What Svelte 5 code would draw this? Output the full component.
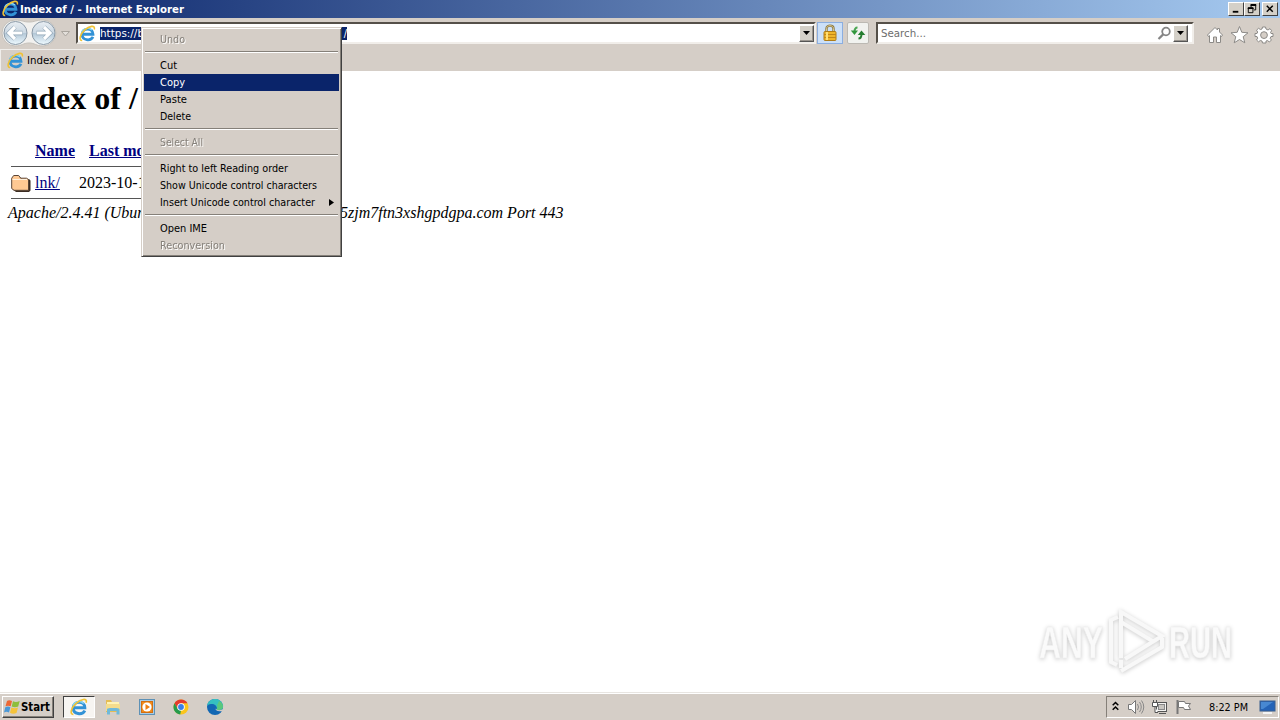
<script>
  // Context menu entries, a null is a separator
  const menuItems = [
    { label: 'Undo', width: 25, disabled: true },
    null,
    { label: 'Cut', width: 17 },
    { label: 'Copy', width: 25, selected: true },
    { label: 'Paste', width: 27 },
    { label: 'Delete', width: 31 },
    null,
    { label: 'Select All', width: 43, disabled: true },
    null,
    { label: 'Right to left Reading order', width: 128 },
    { label: 'Show Unicode control characters', width: 157 },
    { label: 'Insert Unicode control character', width: 155, submenu: true },
    null,
    { label: 'Open IME', width: 47 },
    { label: 'Reconversion', width: 65, disabled: true }
  ];
</script>

<!-- Interface text with a fixed run width -->
{#snippet uiText(label, width, kind = '')}
  <svg class="ui-text {kind}" {width} height="15">
    <text x="0" y="11" textLength={width} lengthAdjust="spacingAndGlyphs">{label}</text>
  </svg>
{/snippet}

{#snippet ieLogo(size)}
  <svg class="icon" width={size} height={size} viewBox="0 0 16 16">
    <path d="M4 8.7H13.2C13.2 2.2 3 2.2 2.9 8.6C2.8 14.8 11 15.4 13.2 11.2" fill="none" stroke="#3292d6" stroke-width="2.6" />
    <path d="M2.6 7.4C3.4 3 9.3 1.9 12.2 4.8" fill="none" stroke="#86d8f6" stroke-width="1.3" />
    <path d="M3 14.6C-.4 14.8 .8 8.9 5.2 4.9C9.4 1.1 15.6-.6 14.4 4.2" fill="none" stroke="#efc235" stroke-width="1.5" />
  </svg>
{/snippet}

{#snippet dropArrow()}
  <span class="drop-button">
    <svg width="7" height="4" viewBox="0 0 7 4"><path d="M0 0H7L3.5 4Z" /></svg>
  </span>
{/snippet}

<div class="desktop">
  <header class="title-bar">
    {@render ieLogo(17)}
    {@render uiText('Index of / - Internet Explorer', 164, 'bold white')}
    <div class="window-buttons">
      <svg width="15" height="13" viewBox="0 0 15 13"><path d="M4 9.5H10" stroke="#000" stroke-width="2" /></svg>
      <svg width="15" height="13" viewBox="0 0 15 13">
        <path d="M6.5 5V2.5H11.5V7.5H9.5M6 2.5H12M3.5 5.5H8.5V10.5H3.5ZM3 6H9" fill="none" stroke="#000" />
        <path d="M6 2H12M3 5.5H9" stroke="#000" stroke-width="2" />
      </svg>
      <svg class="close" width="15" height="13" viewBox="0 0 15 13"><path d="M4 3L10.5 9.5M10.5 3L4 9.5" stroke="#000" stroke-width="1.6" /></svg>
    </div>
  </header>

  <div class="nav-bar">
    <svg class="travel" width="74" height="28" viewBox="0 0 74 28">
      <defs>
        <linearGradient id="orb" x2="0" y2="1">
          <stop offset="0" stop-color="#e9eef3" />
          <stop offset=".48" stop-color="#cbd8e3" />
          <stop offset=".52" stop-color="#b4c8d7" />
          <stop offset="1" stop-color="#eefaff" />
        </linearGradient>
      </defs>
      <path d="M15 1C22 1 23 3 29 3S36 1 43 1A13 13 0 0 1 43 27C36 27 35 24 29 24S22 27 15 27A13 13 0 0 1 15 1Z" fill="#f2f1ef" stroke="#c5c1bb" />
      <circle cx="15.5" cy="14" r="11.5" fill="url(#orb)" stroke="#8b9aa7" />
      <circle cx="43.5" cy="14" r="11.5" fill="url(#orb)" stroke="#8b9aa7" />
      <path d="M22.5 14H10M15 8L9 14L15 20" fill="none" stroke="#8fa4b5" stroke-width="4.4" />
      <path d="M22.2 14H10M15 8L9 14L15 20" fill="none" stroke="#fff" stroke-width="3.2" />
      <path d="M36.5 14H49M44 8L50 14L44 20" fill="none" stroke="#8fa4b5" stroke-width="4.4" />
      <path d="M36.8 14H49M44 8L50 14L44 20" fill="none" stroke="#fff" stroke-width="3.2" />
      <path d="M61.5 12.5H69.5L65.5 17Z" fill="#e3dfda" stroke="#aaa59e" />
    </svg>

    <div class="field address">
      {@render ieLogo(17)}
      <div class="url">{@render uiText('https://b', 44, 'white')}<span>/</span></div>
      {@render dropArrow()}
    </div>

    <div class="tool lock">
      <svg width="16" height="18" viewBox="0 0 16 18">
        <path d="M4.5 9V4.5C4.5 .7 11.5 .7 11.5 4.5V9" fill="none" stroke="#8b7945" stroke-width="2.4" />
        <path d="M4.5 9V4.5C4.5 .7 11.5 .7 11.5 4.5V9" fill="none" stroke="#d8c58a" />
        <rect x="2" y="7.5" width="12" height="9" rx="1" fill="#efb52b" stroke="#ae7c18" />
        <path d="M2 10.5H14M2 13.5H14" stroke="#c28719" />
        <path d="M5 8V16" stroke="#ffdf76" stroke-width="2" />
      </svg>
    </div>
    <div class="tool refresh">
      <svg width="16" height="16" viewBox="0 0 16 16">
        <path d="M7.5 2.5C5 2.5 4.5 4 4.5 7" fill="none" stroke="#4aa653" stroke-width="2" />
        <path d="M.8 5.5L4.5 10L8 5.5Z" fill="#31963c" />
        <path d="M8.5 13.5C11 13.5 11.5 12 11.5 9" fill="none" stroke="#257d30" stroke-width="2" />
        <path d="M7.8 10L11.5 5.5L15.3 10Z" fill="#257d30" />
      </svg>
    </div>

    <div class="field search">
      {@render uiText('Search...', 45, 'gray')}
      <svg class="magnifier" width="15" height="15" viewBox="0 0 15 15">
        <circle cx="9" cy="5.5" r="3.8" fill="none" stroke="#858585" stroke-width="1.8" />
        <path d="M6.2 8.4L1.5 13" stroke="#858585" stroke-width="2.2" />
      </svg>
      {@render dropArrow()}
    </div>

    <svg class="commands" width="70" height="20" viewBox="0 0 70 20">
      <g fill="#fff" stroke="#8c8a87" stroke-linejoin="round">
        <path d="M1.5 10L9 2.5L11.5 5V3.5H13.5V7L16.5 10L15.5 11.5L14.5 10.6V17.5H10.5V12H7.5V17.5H3.5V10.6L2.5 11.5Z" />
        <path d="M33.5 1.5L35.8 7.3L42 7.8L37.2 11.7L38.8 17.8L33.5 14.5L28.2 17.8L29.8 11.7L25 7.8L31.2 7.3Z" />
        <path fill-rule="evenodd" d="M56.5 2H59.5L60 4L62 5L64 3.6L65.6 5.7L64.5 7.5L65 8.5H67V11.5H65L64.2 13.3L65.4 15L63.4 17L61.6 15.6L60 16V18H56.5L56 16L54.3 15.5L52.5 16.8L50.5 15L51.7 13.2L51 11.5H49V8.5H51L51.7 7L50.5 5.2L52.5 3.3L54.4 4.5L56 4ZM58 6.7A3.4 3.4 0 1 0 58 13.5A3.4 3.4 0 1 0 58 6.7Z" />
      </g>
    </svg>
  </div>

  <div class="tab-bar">
    <div class="tab">
      {@render ieLogo(17)}
      {@render uiText('Index of /', 48)}
    </div>
  </div>

  <main>
    <h1>Index of /</h1>
    <div class="listing">
      <div class="row head">
        <span class="cell-icon"></span>
        <a class="name" href="#name">Name</a>
        <a class="modified" href="#modified">Last mo</a>
      </div>
      <hr />
      <div class="row">
        <svg class="cell-icon" width="20" height="22" viewBox="0 0 20 22">
          <path d="M2.5 8L4 5H9L11 7H18L19.5 8.5V18.5L18 20H5L2.5 18Z" fill="#3b2c22" />
          <path d="M.7 6.2L2.7 3.5H7.7L9.7 6.2H15.5L17.5 7.5V18.3H3L.7 16.5Z" fill="#ffc993" stroke="#5b4637" />
          <path d="M1.5 7.5H16" stroke="#fff0dc" />
        </svg>
        <a class="name" href="#lnk">lnk/</a>
        <span class="date">2023-10-1</span>
      </div>
      <hr />
    </div>
    <address>
      <span class="server">Apache/2.4.41 (Ubun</span>
      <span>5zjm7ftn3xshgpdgpa.com Port 443</span>
    </address>
  </main>

  <footer class="taskbar">
    <button class="start">
      <svg width="17" height="16" viewBox="0 0 17 16">
        <path d="M3 2Q5 .7 8 2L6.7 7.3Q4 6 1.5 7.3Z" fill="#ed6835" />
        <path d="M9 2.3Q12 3.7 15.7 2L14.2 7.5Q11 9 7.7 7.6Z" fill="#8dbe3c" />
        <path d="M1.3 8.2Q4 7 6.4 8.2L5 13.4Q2.3 12 0 13.4Z" fill="#4b98d7" />
        <path d="M7.4 8.5Q11 10 14 8.4L12.5 14Q9 15.7 6 13.8Z" fill="#f5c33b" />
      </svg>
      {@render uiText('Start', 29, 'bold start-label')}
    </button>
    <div class="task active">{@render ieLogo(18)}</div>
    <svg class="task-icon" width="18" height="18" viewBox="0 0 18 18">
      <path d="M2 2H7L8 4H15V14H2Z" fill="#e5bd55" />
      <path d="M3 4H15V8H3Z" fill="#fff3b4" />
      <path d="M2 6H16V13H2Z" fill="#f4dc8c" />
      <path d="M3 16.5V11.5Q3 10 6 10H12.5Q15.5 10 15.5 11.5V16.5H12.5V13H6V16.5Z" fill="#70b9d9" />
    </svg>
    <svg class="task-icon" width="18" height="18" viewBox="0 0 18 18">
      <rect x="1.5" y="1.5" width="15" height="15" fill="#a9cce5" stroke="#5d91b6" />
      <rect x="3.5" y="3.5" width="11" height="11" fill="#f28a19" stroke="#d16e11" />
      <circle cx="9" cy="9" r="4.6" fill="#fff" />
      <path d="M7.5 6L12 9L7.5 12Z" fill="#ee7f12" />
    </svg>
    <svg class="task-icon" width="18" height="18" viewBox="0 0 18 18">
      <circle cx="9" cy="9" r="7.5" fill="#fbc51b" />
      <path d="M2.5 5.2A7.5 7.5 0 0 1 15.5 5.2H9L5.7 11Z" fill="#e33b2e" />
      <path d="M2.5 5.2L5.8 11L9 12.6L8.2 16.5A7.5 7.5 0 0 1 2.5 5.2Z" fill="#269b4c" />
      <circle cx="9" cy="9" r="3.8" fill="#fff" />
      <circle cx="9" cy="9" r="2.9" fill="#397fe8" />
    </svg>
    <svg class="task-icon" width="18" height="18" viewBox="0 0 18 18">
      <circle cx="9" cy="9" r="8" fill="#1267b3" />
      <path d="M1 8C2 0 14-2 17 7C18 12 13 13 10.5 11.5C12 9 9 5.5 5 6C3 6.2 1.5 7 1 8Z" fill="#35bfc0" />
      <path d="M13 3C16 4.5 17.6 7 16.8 10C15 12.5 12 12.3 10.5 11.5Q12 9 11 7.5Z" fill="#5bc77c" />
      <path d="M9.5 10.5C9.5 13 13 14 16.5 12.8L17.5 14.5L18 11L16 11.5Q13 13 10.5 11.5Z" fill="#d5cec7" />
    </svg>

    <div class="tray">
      <svg class="chevrons" width="7" height="11" viewBox="0 0 7 11"><path d="M.7 4.3L3.5 1.5L6.3 4.3M.7 8.8L3.5 6L6.3 8.8" fill="none" stroke="#000" stroke-width="1.5" /></svg>
      <svg width="18" height="16" viewBox="0 0 18 16">
        <path d="M1.5 5.5H4.5L8.5 1.5V14.5L4.5 10.5H1.5Z" fill="#fff" stroke="#777" />
        <path d="M10.5 5Q12.5 8 10.5 11M12.5 3Q16 8 12.5 13M14.5 1.5Q19 8 14.5 14.5" fill="none" stroke="#888" />
      </svg>
      <svg width="18" height="16" viewBox="0 0 18 16">
        <rect x="5.5" y="3.5" width="10" height="9" fill="#f4f3f1" stroke="#555" />
        <rect x="7.5" y="5.5" width="6" height="5" fill="#c9c6c1" stroke="#888" />
        <path d="M8 14.5H15M2.5 1V4M5.5 1V4M1.5 3.5H6.5V7.5H1.5ZM4 7.5V13.5H7" fill="#fff" stroke="#555" />
      </svg>
      <svg width="18" height="16" viewBox="0 0 18 16">
        <path d="M2.5 1V15" stroke="#777" stroke-width="2" />
        <path d="M3.5 2.5H9.5L10.5 4.5H15.5L13.5 7L15.5 10.5H9.5L8.5 8.5H3.5Z" fill="#fff" stroke="#777" />
      </svg>
      <span class="clock">{@render uiText('8:22 PM', 39)}</span>
      <svg class="show-desktop" width="17" height="16" viewBox="0 0 17 16">
        <rect x="1" y="2" width="15" height="10" fill="#2463b7" stroke="#3b5f8e" />
        <path d="M2 3H14L4 10H2Z" fill="#4788d2" />
        <path d="M4 14H13" stroke="#f4f4f4" stroke-width="2" />
      </svg>
    </div>
  </footer>

  <div class="context-menu">
    {#each menuItems as item}
      {#if item}
        <div class="item" class:disabled={item.disabled} class:selected={item.selected}>
          {@render uiText(item.label, item.width)}
          {#if item.submenu}
            <svg class="submenu" width="5" height="7" viewBox="0 0 5 7"><path d="M0 0L5 3.5L0 7Z" /></svg>
          {/if}
        </div>
      {:else}
        <div class="separator"></div>
      {/if}
    {/each}
  </div>

  <!-- Watermark in the corner of the recording -->
  <div class="watermark">
    <svg width="220" height="76" viewBox="0 0 220 76">
      <g class="mark-text">
        <text x="9" y="56" textLength="64" lengthAdjust="spacingAndGlyphs">ANY</text>
        <text x="139" y="56" textLength="63" lengthAdjust="spacingAndGlyphs">RUN</text>
      </g>
      <g class="mark-play">
        <path d="M91 56V10L132 34L95 57" />
        <path d="M88 15L81 18V60L87 63M91 20L124 40M91 69L132 45V36M91 66V58" />
      </g>
    </svg>
  </div>
</div>

<style>
  :global(body) {
    margin: 0;
    overflow: hidden;
  }

  .desktop {
    position: relative;
    width: 1280px;
    height: 720px;
    display: flex;
    flex-direction: column;
    background: #fff;
    overflow: hidden;
  }
  svg {
    display: block;
    flex: none;
  }

  .ui-text {
    overflow: visible;
    font-family: "DejaVu Sans Condensed", "DejaVu Sans", sans-serif;
    font-size: 11.3px;
    fill: #000;
  }
  .bold {
    font-weight: bold;
  }
  .start-label {
    font-size: 12px;
  }
  .white {
    fill: #fff;
  }
  .gray {
    fill: #6d6d6d;
  }

  /* Title bar */
  .title-bar {
    height: 18px;
    box-sizing: border-box;
    display: flex;
    align-items: center;
    padding: 0 2px 1px;
    background: linear-gradient(90deg, #0a246a, #a6caf0);
  }
  .title-bar .ui-text {
    margin: 1px 0 0 1px;
  }
  .window-buttons {
    display: flex;
    margin-left: auto;
  }
  .window-buttons svg {
    width: 14px;
    height: 12px;
    background: #d4d0c8;
    border: 1px solid;
    border-color: #fff #404040 #404040 #fff;
  }
  .window-buttons .close {
    margin-left: 2px;
  }

  /* Navigation row */
  .nav-bar {
    height: 31px;
    box-sizing: border-box;
    display: flex;
    padding: 4px 0 0;
    background: #d5cec7;
  }
  .travel {
    margin: -3px 2px 0 0;
  }
  .field {
    height: 22px;
    box-sizing: border-box;
    display: flex;
    align-items: center;
    background: #fff;
    border: 2px solid;
    border-color: #555049 #f1eeea #f1eeea #555049;
  }
  .address {
    width: 740px;
    padding-left: 1px;
  }
  .url {
    width: 247px;
    height: 13px;
    display: flex;
    align-items: center;
    justify-content: space-between;
    margin-left: 4px;
    background: #0a246a;
    color: #fff;
    font: 11px "DejaVu Sans Condensed", sans-serif;
  }
  .url .ui-text {
    margin-top: 1px;
  }
  .drop-button {
    width: 15px;
    height: 17px;
    box-sizing: border-box;
    display: flex;
    align-items: center;
    justify-content: center;
    margin-left: auto;
    background: #d4d0c8;
    border: 1px solid;
    border-color: #fff #555 #555 #fff;
    box-shadow: inset -1px -1px #9a958f;
  }
  .tool {
    height: 22px;
    box-sizing: border-box;
    display: flex;
    align-items: center;
    justify-content: center;
  }
  .lock {
    width: 26px;
    margin-left: 1px;
    padding-right: 1px;
    background: #cce0f8;
    border: 1px solid #8baee0;
  }
  .refresh {
    width: 22px;
    margin-left: 4px;
    background: #f1f2ef;
    border: 1px solid #bcb9b3;
    border-radius: 2px;
  }
  .search {
    width: 318px;
    margin-left: 7px;
    padding: 0 4px 0 3px;
  }
  .search .ui-text {
    margin-top: 1px;
  }
  .magnifier {
    margin-left: auto;
  }
  .search .drop-button {
    margin-left: 1px;
  }
  .commands {
    margin: 3px 0 0 12px;
  }

  /* Tabs */
  .tab-bar {
    height: 22px;
    background: #d5cec7;
  }
  .tab {
    height: 22px;
    width: 240px;
    box-sizing: border-box;
    display: flex;
    align-items: center;
    gap: 3px;
    padding: 0 0 1px 6px;
    border-top: 1px solid #f0eeeb;
    border-left: 1px solid #f0eeeb;
  }

  /* Directory listing */
  main {
    flex: 1;
    padding: 9px 8px 0;
    font: 16px "Liberation Serif", serif;
    color: #000;
  }
  h1 {
    margin: 0;
    height: 61px;
    font-size: 32px;
    line-height: 36px;
  }
  .listing {
    width: 320px;
    padding-left: 3px;
  }
  .row {
    display: flex;
    align-items: center;
    height: 31px;
  }
  .row.head {
    height: 20px;
    margin-bottom: 5px;
    font-weight: bold;
  }
  .cell-icon {
    width: 20px;
    margin-right: 4px;
  }
  a {
    color: #000080;
    text-decoration: underline;
  }
  .name {
    width: 44px;
  }
  .head .name {
    width: 54px;
  }
  hr {
    height: 1px;
    margin: 0;
    border: 0;
    background: #555;
  }
  address {
    display: flex;
    padding-top: 5px;
    line-height: 18px;
  }
  .server {
    width: 332px;
  }

  /* Taskbar */
  .taskbar {
    height: 28px;
    box-sizing: border-box;
    display: flex;
    align-items: center;
    padding: 1px 1px 0 2px;
    background: #d5cec7;
    border-top: 1px solid #e8e5e1;
    box-shadow: inset 0 1px #fff;
  }
  .start {
    width: 52px;
    height: 22px;
    box-sizing: border-box;
    display: flex;
    align-items: center;
    padding: 0 1px;
    background: #d5cec7;
    border: 1px solid;
    border-color: #fff #404040 #404040 #fff;
    box-shadow: inset -1px -1px #858079;
  }
  .task {
    width: 32px;
    height: 22px;
    box-sizing: border-box;
    display: flex;
    align-items: center;
    justify-content: center;
    margin-left: 9px;
    margin-right: 9px;
    background: #f7f5f2;
    border: 1px solid;
    border-color: #404040 #fff #fff #404040;
  }
  .task-icon {
    margin-right: 16px;
  }
  .tray {
    width: 173px;
    height: 22px;
    box-sizing: border-box;
    display: flex;
    align-items: center;
    margin-left: auto;
    padding-left: 5px;
    gap: 6px;
    border: 1px solid;
    border-color: #858079 #fff #fff #858079;
  }
  .chevrons {
    margin: 0 2px 2px 0;
  }
  .clock {
    margin-left: 10px;
  }
  .show-desktop {
    margin-left: 5px;
  }

  /* Context menu over the page */
  .context-menu {
    position: absolute;
    left: 141px;
    top: 27px;
    width: 201px;
    height: 230px;
    box-sizing: border-box;
    padding: 2px 1px;
    background: #d5cec7;
    border: 1px solid;
    border-color: #d5cec7 #404040 #404040 #d5cec7;
    box-shadow: inset 1px 1px #fff, inset -1px -1px #858079;
  }
  .item {
    height: 17px;
    width: 195px;
    box-sizing: border-box;
    display: flex;
    align-items: center;
    margin-left: 1px;
    padding: 2px 0 0 16px;
  }
  .selected {
    height: 17px;
    margin-top: 1px;
    margin-bottom: -1px;
    padding-top: 0;
    background: #0a246a;
  }
  .selected .ui-text {
    fill: #fff;
  }
  .disabled .ui-text {
    fill: #85807a;
    filter: drop-shadow(1px 1px 0 #fff);
  }
  .submenu {
    margin-left: 14px;
  }
  .separator {
    height: 1px;
    margin: 4px 2px 3px;
    border-top: 1px solid #858079;
    background: #fff;
  }

  .watermark {
    position: absolute;
    left: 1030px;
    top: 602px;
    filter: drop-shadow(0 1px 2px #c8c8c8);
  }
  .mark-text {
    font: bold 44px "Liberation Sans", sans-serif;
    fill: #fafafa;
    stroke: #eee;
    stroke-width: 0.5px;
  }
  .mark-play {
    fill: none;
    stroke: #f8f8f8;
    stroke-width: 4px;
  }
</style>
